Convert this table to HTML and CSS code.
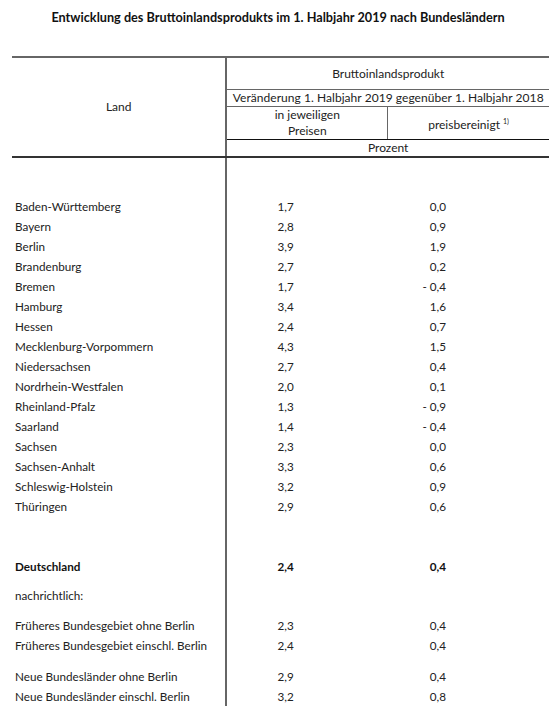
FILE: index.html
```html
<!DOCTYPE html>
<html lang="de">
<head>
    <meta charset="UTF-8">
    <meta name="viewport" content="width=device-width, initial-scale=1.0">
    <title>Bruttoinlandsprodukt nach Bundesländern</title>
    <link rel="stylesheet" href="styles.css">
</head>
<body>
    <h1 class="title">Entwicklung des Bruttoinlandsprodukts im 1. Halbjahr 2019 nach Bundesländern</h1>
    <table class="bip-table">
        <colgroup>
            <col class="col-land">
            <col class="col-num">
            <col class="col-num">
        </colgroup>
        <thead>
            <tr class="h-row1">
                <th rowspan="4" class="land-head">Land</th>
                <th colspan="2" class="head-bip">Bruttoinlandsprodukt</th>
            </tr>
            <tr class="h-row2">
                <th colspan="2" class="head-change">Veränderung 1. Halbjahr 2019 gegenüber 1. Halbjahr 2018</th>
            </tr>
            <tr class="h-row3">
                <th class="head-cur">in jeweiligen<br>Preisen</th>
                <th class="head-real">preisbereinigt <sup>1)</sup></th>
            </tr>
            <tr class="h-row4">
                <th colspan="2" class="head-unit">Prozent</th>
            </tr>
        </thead>
        <tbody>
            <tr class="spacer top-gap"><td></td><td></td><td></td></tr>
            <tr><td>Baden-Württemberg</td><td>1,7</td><td>0,0</td></tr>
            <tr><td>Bayern</td><td>2,8</td><td>0,9</td></tr>
            <tr><td>Berlin</td><td>3,9</td><td>1,9</td></tr>
            <tr><td>Brandenburg</td><td>2,7</td><td>0,2</td></tr>
            <tr><td>Bremen</td><td>1,7</td><td>- 0,4</td></tr>
            <tr><td>Hamburg</td><td>3,4</td><td>1,6</td></tr>
            <tr><td>Hessen</td><td>2,4</td><td>0,7</td></tr>
            <tr><td>Mecklenburg-Vorpommern</td><td>4,3</td><td>1,5</td></tr>
            <tr><td>Niedersachsen</td><td>2,7</td><td>0,4</td></tr>
            <tr><td>Nordrhein-Westfalen</td><td>2,0</td><td>0,1</td></tr>
            <tr><td>Rheinland-Pfalz</td><td>1,3</td><td>- 0,9</td></tr>
            <tr><td>Saarland</td><td>1,4</td><td>- 0,4</td></tr>
            <tr><td>Sachsen</td><td>2,3</td><td>0,0</td></tr>
            <tr><td>Sachsen-Anhalt</td><td>3,3</td><td>0,6</td></tr>
            <tr><td>Schleswig-Holstein</td><td>3,2</td><td>0,9</td></tr>
            <tr><td>Thüringen</td><td>2,9</td><td>0,6</td></tr>
            <tr class="spacer gap-40"><td></td><td></td><td></td></tr>
            <tr class="total"><td>Deutschland</td><td>2,4</td><td>0,4</td></tr>
            <tr class="spacer gap-9"><td></td><td></td><td></td></tr>
            <tr><td>nachrichtlich:</td><td></td><td></td></tr>
            <tr class="spacer gap-10"><td></td><td></td><td></td></tr>
            <tr><td>Früheres Bundesgebiet ohne Berlin</td><td>2,3</td><td>0,4</td></tr>
            <tr><td>Früheres Bundesgebiet einschl. Berlin</td><td>2,4</td><td>0,4</td></tr>
            <tr class="spacer gap-11"><td></td><td></td><td></td></tr>
            <tr><td>Neue Bundesländer ohne Berlin</td><td>2,9</td><td>0,4</td></tr>
            <tr class="last"><td>Neue Bundesländer einschl. Berlin</td><td>3,2</td><td>0,8</td></tr>
        </tbody>
    </table>
</body>
</html>
```

FILE: styles.css
```css
body {
    font-family: Lato, "Open Sans", sans-serif;
    font-size: 11.7px;
    color: #222;
    background: #fff;
    margin: 0;
    padding: 0;
}

.title {
    font-size: 12.7px;
    font-weight: bold;
    text-align: center;
    margin: 0;
    padding: 9px 0 0;
    height: 56px;
    box-sizing: border-box;
    color: #111;
}

.bip-table {
    border-collapse: collapse;
    margin-left: 12px;
    width: 537px;
    table-layout: fixed;
}

.col-land {
    width: 214px;
}

.col-num {
    width: 161px;
}

th {
    font-weight: normal;
    font-size: 12px;
    padding: 0;
    text-align: center;
    line-height: 16px;
}

.bip-table thead tr:first-child th {
    border-top: 2px solid #666;
}

.land-head {
    border-right: 2px solid #666;
    border-bottom: 2px solid #333;
}

.h-row1 th {
    height: 31px;
}

.head-bip {
    border-bottom: 1px solid #666;
}

.head-change {
    height: 16px;
    border-bottom: 1px solid #666;
    letter-spacing: 0.05px;
    white-space: nowrap;
}

.h-row3 th {
    height: 31px;
    border-bottom: 1px solid #111;
}

.head-cur {
    border-right: 1px solid #666;
}

.head-real sup {
    font-size: 7px;
    vertical-align: 5px;
}

.head-unit {
    height: 16px;
    border-bottom: 2px solid #333;
}

td {
    height: 20px;
    padding: 0;
    line-height: 20px;
    white-space: nowrap;
}

td:first-child {
    padding-left: 3px;
    border-right: 2px solid #666;
}

td:nth-child(2) {
    text-align: right;
    padding-right: 94px;
}

td:nth-child(3) {
    text-align: right;
    padding-right: 103px;
}

.spacer td {
    height: 0;
    line-height: 0;
}

.top-gap td {
    height: 38px;
}

.gap-40 td {
    height: 40px;
}

.gap-9 td {
    height: 9px;
}

.gap-10 td {
    height: 10px;
}

.gap-11 td {
    height: 11px;
}

.total td {
    font-weight: bold;
    color: #111;
}

.last td {
    height: 18px;
    vertical-align: top;
    line-height: 20px;
}
```
